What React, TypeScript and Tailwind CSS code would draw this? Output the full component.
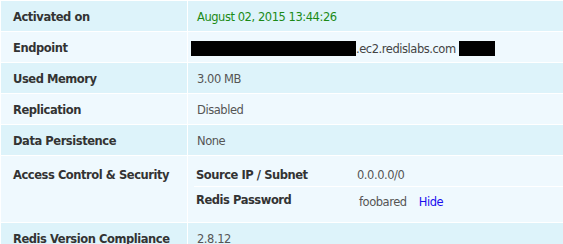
import React from "react";

const font = { fontFamily: '"DejaVu Sans", Verdana, sans-serif' };

type Row = { label: string; value: React.ReactNode; tone: "a" | "b" };

const Label = ({ children }: { children: React.ReactNode }) => (
  <span className="font-bold text-[#333333]">{children}</span>
);

const Redacted = ({ w, className = "" }: { w: string; className?: string }) => (
  <span className={`inline-block h-[15px] bg-black align-[-3px] ${w} ${className}`} />
);

export default function App() {
  const rows: Row[] = [
    {
      label: "Activated on",
      value: <span className="text-[#1b8a17]">August 02, 2015 13:44:26</span>,
      tone: "a",
    },
    {
      label: "Endpoint",
      value: (
        <span className="text-[#444444]">
          <Redacted w="w-[165px]" className="-ml-[6px]" />
          .ec2.redislabs.com
          <Redacted w="w-[36px]" className="ml-[3px]" />
        </span>
      ),
      tone: "b",
    },
    { label: "Used Memory", value: "3.00 MB", tone: "a" },
    { label: "Replication", value: "Disabled", tone: "b" },
    { label: "Data Persistence", value: "None", tone: "a" },
  ];

  const bg = (t: "a" | "b") => (t === "a" ? "bg-[#ddf3fa]" : "bg-[#eff9fe]");

  return (
    <div
      className="w-[563px] h-[244px] overflow-hidden bg-white pl-px pt-px text-[11.5px] leading-[14px] tracking-[-0.45px] text-[#555555]"
      style={font}
    >
      <div className="grid grid-cols-[186px_1fr] gap-px">
        {rows.map((r) => (
          <React.Fragment key={r.label}>
            <div className={`h-[30px] pl-[12px] pt-[9px] ${bg(r.tone)}`}>
              <Label>{r.label}</Label>
            </div>
            <div className={`h-[30px] pl-[9px] pt-[9px] whitespace-nowrap ${bg(r.tone)}`}>
              {r.value}
            </div>
          </React.Fragment>
        ))}

        {/* access control row with nested table */}
        <div className="h-[66px] pl-[12px] pt-[12px] bg-[#eff9fe]">
          <Label>Access Control &amp; Security</Label>
        </div>
        <div className="h-[66px] bg-[#eff9fe] pl-[6px]">
          <div className="flex h-[31px] pt-[12px] pl-[2px] border-b border-white">
            <div className="w-[161px]">
              <Label>Source IP / Subnet</Label>
            </div>
            <div>0.0.0.0/0</div>
          </div>
          <div className="flex h-[34px] pl-[2px]">
            <div className="w-[163px] pt-[6px]">
              <Label>Redis Password</Label>
            </div>
            <div className="pt-[8px] flex gap-[12px]">
              <span>foobared</span>
              <span className="text-[#1a0dee]">Hide</span>
            </div>
          </div>
        </div>

        <div className="h-[30px] pl-[12px] pt-[9px] bg-[#ddf3fa]">
          <Label>Redis Version Compliance</Label>
        </div>
        <div className="h-[30px] pl-[9px] pt-[9px] bg-[#ddf3fa]">2.8.12</div>
      </div>
    </div>
  );
}
